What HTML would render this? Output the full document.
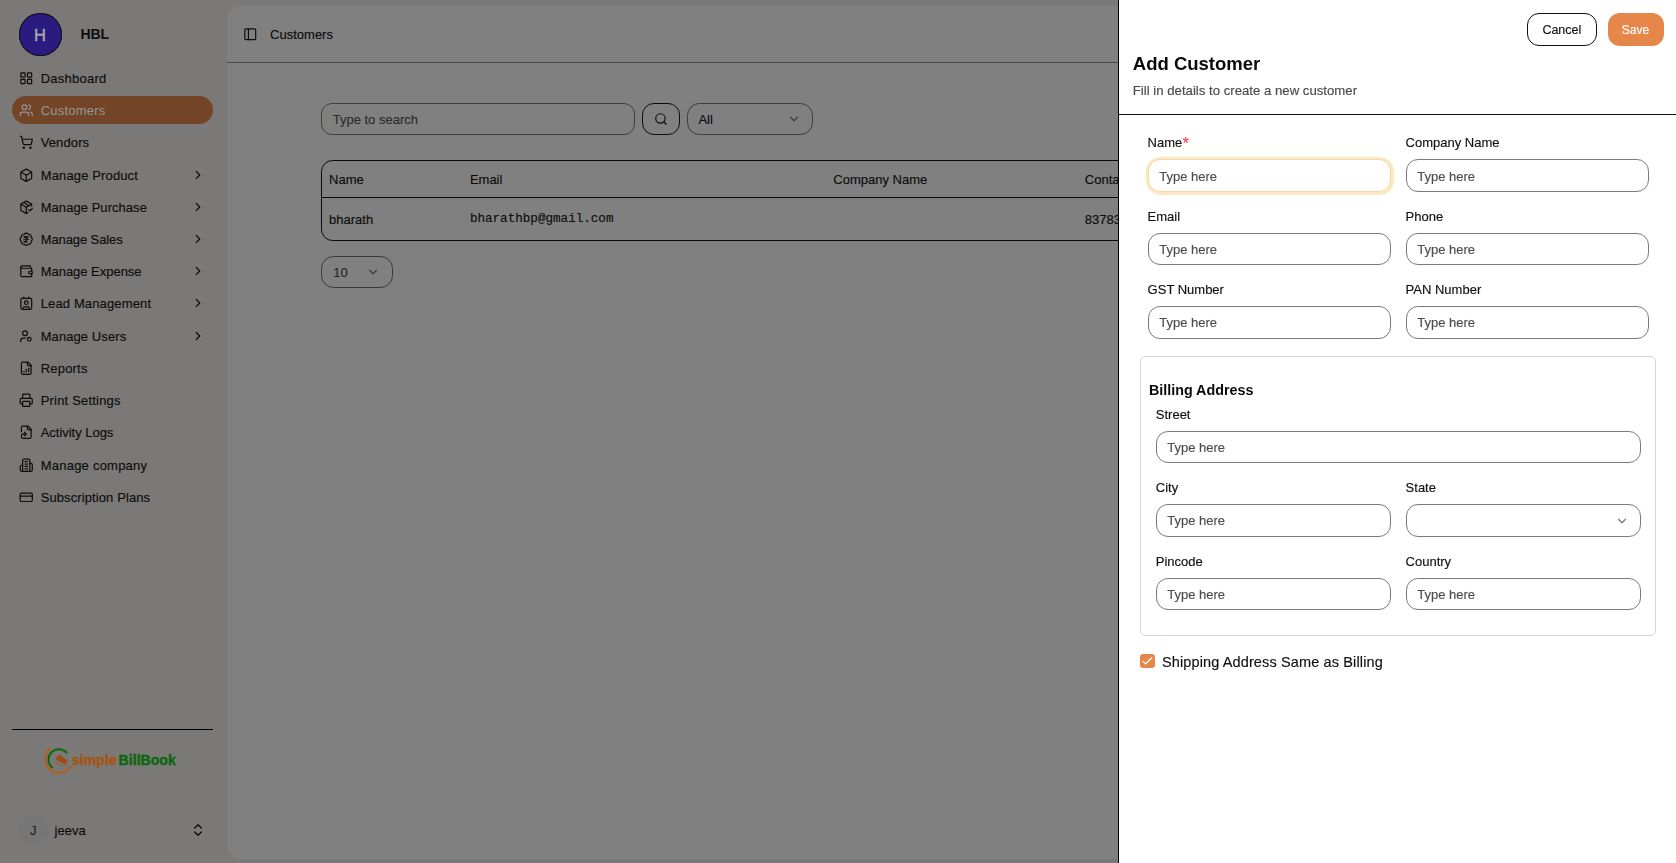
<!DOCTYPE html>
<html><head><meta charset="utf-8"><title>Add Customer</title>
<style>
html,body{margin:0;padding:0;width:1676px;height:863px;overflow:hidden;background:#7a7977;}
.r{position:absolute;}
.t{position:absolute;line-height:1;white-space:nowrap;}
.ic{position:absolute;overflow:visible;}
</style></head><body>
<div class="r" style="left:0px;top:0px;width:1676px;height:863px;background:#7a7977;"></div>
<div class="r" style="left:227px;top:6px;width:1100px;height:853px;background:#808080;border-radius:14px;"></div>
<div class="r" style="left:19.3px;top:13px;width:42.5px;height:42.5px;background:#2a1b80;border-radius:50%;box-shadow:0 0 0 1px #111 inset;"></div>
<div class="t" style="left:34.00px;top:27.03px;font-size:16.5px;color:#adadad;font-weight:400;font-family:'Liberation Sans', sans-serif;-webkit-text-stroke:0.35px #adadad;">H</div>
<div class="t" style="left:80.40px;top:27.15px;font-size:14px;color:#0d0d0d;font-weight:700;font-family:'Liberation Sans', sans-serif;">HBL</div>
<div class="r" style="left:12px;top:96px;width:201px;height:28px;background:#734425;border-radius:14px;"></div>
<div class="t" style="left:40.70px;top:71.99px;font-size:13px;color:#0d0d0d;font-weight:400;font-family:'Liberation Sans', sans-serif;letter-spacing:0.25px;-webkit-text-stroke:0.15px #0d0d0d;">Dashboard</div>
<svg class="ic" style="left:18.75px;top:70.85px" width="14.5" height="14.5" viewBox="0 0 24 24" fill="none" stroke="#0d0d0d" stroke-width="2" stroke-linecap="round" stroke-linejoin="round"><rect width="7" height="7" x="3" y="3" rx="1"/><rect width="7" height="7" x="14" y="3" rx="1"/><rect width="7" height="7" x="14" y="14" rx="1"/><rect width="7" height="7" x="3" y="14" rx="1"/></svg>
<div class="t" style="left:40.70px;top:103.99px;font-size:13px;color:#969696;font-weight:400;font-family:'Liberation Sans', sans-serif;letter-spacing:0.225px;">Customers</div>
<svg class="ic" style="left:18.75px;top:102.85px" width="14.5" height="14.5" viewBox="0 0 24 24" fill="none" stroke="#969696" stroke-width="2" stroke-linecap="round" stroke-linejoin="round"><path d="M16 21v-2a4 4 0 0 0-4-4H6a4 4 0 0 0-4 4v2"/><circle cx="9" cy="7" r="4"/><path d="M22 21v-2a4 4 0 0 0-3-3.87"/><path d="M16 3.13a4 4 0 0 1 0 7.75"/></svg>
<div class="t" style="left:40.70px;top:135.99px;font-size:13px;color:#0d0d0d;font-weight:400;font-family:'Liberation Sans', sans-serif;letter-spacing:0.117px;-webkit-text-stroke:0.15px #0d0d0d;">Vendors</div>
<svg class="ic" style="left:18.75px;top:134.85px" width="14.5" height="14.5" viewBox="0 0 24 24" fill="none" stroke="#0d0d0d" stroke-width="2" stroke-linecap="round" stroke-linejoin="round"><circle cx="8" cy="21" r="1"/><circle cx="19" cy="21" r="1"/><path d="M2.05 2.05h2l2.66 12.42a2 2 0 0 0 2 1.58h9.78a2 2 0 0 0 1.95-1.57l1.65-7.43H5.12"/></svg>
<div class="t" style="left:40.70px;top:168.99px;font-size:13px;color:#0d0d0d;font-weight:400;font-family:'Liberation Sans', sans-serif;letter-spacing:0.138px;-webkit-text-stroke:0.15px #0d0d0d;">Manage Product</div>
<svg class="ic" style="left:18.75px;top:167.85px" width="14.5" height="14.5" viewBox="0 0 24 24" fill="none" stroke="#0d0d0d" stroke-width="2" stroke-linecap="round" stroke-linejoin="round"><path d="M21 8a2 2 0 0 0-1-1.73l-7-4a2 2 0 0 0-2 0l-7 4A2 2 0 0 0 3 8v8a2 2 0 0 0 1 1.73l7 4a2 2 0 0 0 2 0l7-4A2 2 0 0 0 21 16Z"/><path d="m3.3 7 8.7 5 8.7-5"/><path d="M12 22V12"/></svg>
<svg class="ic" style="left:191px;top:168.10px" width="14" height="14" viewBox="0 0 24 24" fill="none" stroke="#0d0d0d" stroke-width="2" stroke-linecap="round" stroke-linejoin="round"><path d="m9 18 6-6-6-6"/></svg>
<div class="t" style="left:40.70px;top:200.99px;font-size:13px;color:#0d0d0d;font-weight:400;font-family:'Liberation Sans', sans-serif;letter-spacing:0.05px;-webkit-text-stroke:0.15px #0d0d0d;">Manage Purchase</div>
<svg class="ic" style="left:18.75px;top:199.85px" width="14.5" height="14.5" viewBox="0 0 24 24" fill="none" stroke="#0d0d0d" stroke-width="2" stroke-linecap="round" stroke-linejoin="round"><path d="m16 16 2 2 4-4"/><path d="M21 10V8a2 2 0 0 0-1-1.73l-7-4a2 2 0 0 0-2 0l-7 4A2 2 0 0 0 3 8v8a2 2 0 0 0 1 1.73l7 4a2 2 0 0 0 2 0l2-1.14"/><path d="m7.5 4.27 9 5.15"/><polyline points="3.29 7 12 12 20.71 7"/><line x1="12" x2="12" y1="22" y2="12"/></svg>
<svg class="ic" style="left:191px;top:200.10px" width="14" height="14" viewBox="0 0 24 24" fill="none" stroke="#0d0d0d" stroke-width="2" stroke-linecap="round" stroke-linejoin="round"><path d="m9 18 6-6-6-6"/></svg>
<div class="t" style="left:40.70px;top:232.99px;font-size:13px;color:#0d0d0d;font-weight:400;font-family:'Liberation Sans', sans-serif;letter-spacing:-0.1px;-webkit-text-stroke:0.15px #0d0d0d;">Manage Sales</div>
<svg class="ic" style="left:18.75px;top:231.85px" width="14.5" height="14.5" viewBox="0 0 24 24" fill="none" stroke="#0d0d0d" stroke-width="2" stroke-linecap="round" stroke-linejoin="round"><path d="M3.85 8.62a4 4 0 0 1 4.78-4.77 4 4 0 0 1 6.74 0 4 4 0 0 1 4.78 4.78 4 4 0 0 1 0 6.74 4 4 0 0 1-4.77 4.78 4 4 0 0 1-6.75 0 4 4 0 0 1-4.78-4.77 4 4 0 0 1 0-6.76Z"/><path d="M8 8h8"/><path d="M8 12h8"/><path d="m13 17-5-1h1a4 4 0 0 0 0-8"/></svg>
<svg class="ic" style="left:191px;top:232.10px" width="14" height="14" viewBox="0 0 24 24" fill="none" stroke="#0d0d0d" stroke-width="2" stroke-linecap="round" stroke-linejoin="round"><path d="m9 18 6-6-6-6"/></svg>
<div class="t" style="left:40.70px;top:264.99px;font-size:13px;color:#0d0d0d;font-weight:400;font-family:'Liberation Sans', sans-serif;letter-spacing:-0.023px;-webkit-text-stroke:0.15px #0d0d0d;">Manage Expense</div>
<svg class="ic" style="left:18.75px;top:263.85px" width="14.5" height="14.5" viewBox="0 0 24 24" fill="none" stroke="#0d0d0d" stroke-width="2" stroke-linecap="round" stroke-linejoin="round"><path d="M19 7V4a1 1 0 0 0-1-1H5a2 2 0 0 0 0 4h15a1 1 0 0 1 1 1v4h-3a2 2 0 0 0 0 4h3a1 1 0 0 0 1-1v-2a1 1 0 0 0-1-1"/><path d="M3 5v14a2 2 0 0 0 2 2h15a1 1 0 0 0 1-1v-4"/></svg>
<svg class="ic" style="left:191px;top:264.10px" width="14" height="14" viewBox="0 0 24 24" fill="none" stroke="#0d0d0d" stroke-width="2" stroke-linecap="round" stroke-linejoin="round"><path d="m9 18 6-6-6-6"/></svg>
<div class="t" style="left:40.70px;top:296.99px;font-size:13px;color:#0d0d0d;font-weight:400;font-family:'Liberation Sans', sans-serif;letter-spacing:0.136px;-webkit-text-stroke:0.15px #0d0d0d;">Lead Management</div>
<svg class="ic" style="left:18.75px;top:295.85px" width="14.5" height="14.5" viewBox="0 0 24 24" fill="none" stroke="#0d0d0d" stroke-width="2" stroke-linecap="round" stroke-linejoin="round"><path d="M16 2v2"/><path d="M7 22v-2a2 2 0 0 1 2-2h6a2 2 0 0 1 2 2v2"/><path d="M8 2v2"/><circle cx="12" cy="11" r="3"/><rect x="3" y="4" width="18" height="18" rx="2"/></svg>
<svg class="ic" style="left:191px;top:296.10px" width="14" height="14" viewBox="0 0 24 24" fill="none" stroke="#0d0d0d" stroke-width="2" stroke-linecap="round" stroke-linejoin="round"><path d="m9 18 6-6-6-6"/></svg>
<div class="t" style="left:40.70px;top:329.99px;font-size:13px;color:#0d0d0d;font-weight:400;font-family:'Liberation Sans', sans-serif;letter-spacing:0.082px;-webkit-text-stroke:0.15px #0d0d0d;">Manage Users</div>
<svg class="ic" style="left:18.75px;top:328.85px" width="14.5" height="14.5" viewBox="0 0 24 24" fill="none" stroke="#0d0d0d" stroke-width="2" stroke-linecap="round" stroke-linejoin="round"><circle cx="10" cy="7" r="4"/><path d="M10.3 15H7a4 4 0 0 0-4 4v2"/><circle cx="17" cy="17" r="3"/></svg>
<svg class="ic" style="left:191px;top:329.10px" width="14" height="14" viewBox="0 0 24 24" fill="none" stroke="#0d0d0d" stroke-width="2" stroke-linecap="round" stroke-linejoin="round"><path d="m9 18 6-6-6-6"/></svg>
<div class="t" style="left:40.70px;top:361.99px;font-size:13px;color:#0d0d0d;font-weight:400;font-family:'Liberation Sans', sans-serif;letter-spacing:0.2px;-webkit-text-stroke:0.15px #0d0d0d;">Reports</div>
<svg class="ic" style="left:18.75px;top:360.85px" width="14.5" height="14.5" viewBox="0 0 24 24" fill="none" stroke="#0d0d0d" stroke-width="2" stroke-linecap="round" stroke-linejoin="round"><path d="M15 2H6a2 2 0 0 0-2 2v16a2 2 0 0 0 2 2h12a2 2 0 0 0 2-2V7Z"/><path d="M14 2v4a2 2 0 0 0 2 2h4"/><path d="M8 18v-1"/><path d="M12 18v-4"/><path d="M16 18v-6"/></svg>
<div class="t" style="left:40.70px;top:393.99px;font-size:13px;color:#0d0d0d;font-weight:400;font-family:'Liberation Sans', sans-serif;letter-spacing:0.192px;-webkit-text-stroke:0.15px #0d0d0d;">Print Settings</div>
<svg class="ic" style="left:18.75px;top:392.85px" width="14.5" height="14.5" viewBox="0 0 24 24" fill="none" stroke="#0d0d0d" stroke-width="2" stroke-linecap="round" stroke-linejoin="round"><path d="M6 18H4a2 2 0 0 1-2-2v-5a2 2 0 0 1 2-2h16a2 2 0 0 1 2 2v5a2 2 0 0 1-2 2h-2"/><path d="M6 9V3a1 1 0 0 1 1-1h10a1 1 0 0 1 1 1v6"/><rect x="6" y="14" width="12" height="8" rx="1"/></svg>
<div class="t" style="left:40.70px;top:425.99px;font-size:13px;color:#0d0d0d;font-weight:400;font-family:'Liberation Sans', sans-serif;letter-spacing:-0.025px;-webkit-text-stroke:0.15px #0d0d0d;">Activity Logs</div>
<svg class="ic" style="left:18.75px;top:424.85px" width="14.5" height="14.5" viewBox="0 0 24 24" fill="none" stroke="#0d0d0d" stroke-width="2" stroke-linecap="round" stroke-linejoin="round"><path d="M4 11V4a2 2 0 0 1 2-2h9l5 5v13a2 2 0 0 1-2 2H6a2 2 0 0 1-2-2v-1"/><path d="M14 2v4a2 2 0 0 0 2 2h4"/><path d="M4 18a3 3 0 0 1 3-3h5"/><path d="m9 12 3 3-3 3"/></svg>
<div class="t" style="left:40.70px;top:458.99px;font-size:13px;color:#0d0d0d;font-weight:400;font-family:'Liberation Sans', sans-serif;letter-spacing:0.231px;-webkit-text-stroke:0.15px #0d0d0d;">Manage company</div>
<svg class="ic" style="left:18.75px;top:457.85px" width="14.5" height="14.5" viewBox="0 0 24 24" fill="none" stroke="#0d0d0d" stroke-width="2" stroke-linecap="round" stroke-linejoin="round"><path d="M6 22V4a2 2 0 0 1 2-2h8a2 2 0 0 1 2 2v18Z"/><path d="M6 12H4a2 2 0 0 0-2 2v6a2 2 0 0 0 2 2h2"/><path d="M18 9h2a2 2 0 0 1 2 2v9a2 2 0 0 1-2 2h-2"/><path d="M10 6h4"/><path d="M10 10h4"/><path d="M10 14h4"/><path d="M10 18h4"/></svg>
<div class="t" style="left:40.70px;top:490.99px;font-size:13px;color:#0d0d0d;font-weight:400;font-family:'Liberation Sans', sans-serif;letter-spacing:0.1px;-webkit-text-stroke:0.15px #0d0d0d;">Subscription Plans</div>
<svg class="ic" style="left:18.75px;top:489.85px" width="14.5" height="14.5" viewBox="0 0 24 24" fill="none" stroke="#0d0d0d" stroke-width="2" stroke-linecap="round" stroke-linejoin="round"><rect width="20" height="14" x="2" y="5" rx="2"/><line x1="2" x2="22" y1="10" y2="10"/></svg>
<div class="r" style="left:12px;top:729px;width:201px;height:1px;background:#000;"></div>
<svg class="ic" style="left:40px;top:742px" width="40" height="40" viewBox="0 0 40 40">
<path d="M9.75 6.66 A14.0 14.0 0 1 0 30.91 24.73" fill="none" stroke="#b05f1c" stroke-width="2" stroke-linecap="round"/>
<path d="M11.89 25.29 A10.4 10.4 0 1 1 26.46 10.47" fill="none" stroke="#0c6a0c" stroke-width="2.1" stroke-linecap="round"/>
<path d="M16.2 15.2 L19.6 12.8 Q24 16.5 27.4 18.2 L26.2 22.4 Q21 21 16.4 17.8 Z" fill="#a34a12"/>
<path d="M15.2 20.2 q5 4.2 12.2 2.8" fill="none" stroke="#9a5a30" stroke-width="1.1" opacity="0.7"/>
</svg>
<div class="t" style="left:72.00px;top:753.15px;font-size:14px;color:#a9530f;font-weight:700;font-family:'Liberation Sans', sans-serif;letter-spacing:0.05px;-webkit-text-stroke:0.35px #a9530f;">simple</div>
<div class="t" style="left:118.60px;top:753.15px;font-size:14px;color:#0b650b;font-weight:700;font-family:'Liberation Sans', sans-serif;letter-spacing:0.05px;-webkit-text-stroke:0.35px #0b650b;">BillBook</div>
<div class="r" style="left:19px;top:816px;width:28.6px;height:28.6px;background:#767676;border-radius:50%;"></div>
<div class="t" style="left:29.90px;top:823.99px;font-size:13px;color:#222;font-weight:400;font-family:'Liberation Sans', sans-serif;-webkit-text-stroke:0.15px #222;">J</div>
<div class="t" style="left:54.60px;top:823.99px;font-size:13px;color:#0d0d0d;font-weight:400;font-family:'Liberation Sans', sans-serif;-webkit-text-stroke:0.15px #0d0d0d;">jeeva</div>
<svg class="ic" style="left:190px;top:822px" width="16" height="16" viewBox="0 0 24 24" fill="none" stroke="#0d0d0d" stroke-width="2" stroke-linecap="round" stroke-linejoin="round"><path d="m7 15 5 5 5-5"/><path d="m7 9 5-5 5 5"/></svg>
<svg class="ic" style="left:242.75px;top:26.75px" width="14.5" height="14.5" viewBox="0 0 24 24" fill="none" stroke="#0d0d0d" stroke-width="2" stroke-linecap="round" stroke-linejoin="round"><rect width="18" height="18" x="3" y="3" rx="2"/><path d="M9 3v18"/></svg>
<div class="t" style="left:270.10px;top:27.99px;font-size:13px;color:#0d0d0d;font-weight:400;font-family:'Liberation Sans', sans-serif;-webkit-text-stroke:0.15px #0d0d0d;">Customers</div>
<div class="r" style="left:227px;top:62px;width:1000px;height:1px;background:#4a4a4a;"></div>
<div class="r" style="left:321px;top:103px;width:314px;height:32px;border:1px solid #414141;border-radius:11px;box-sizing:border-box;"></div>
<div class="t" style="left:332.70px;top:112.99px;font-size:13px;color:#2c2c2c;font-weight:400;font-family:'Liberation Sans', sans-serif;-webkit-text-stroke:0.15px #2c2c2c;">Type to search</div>
<div class="r" style="left:642px;top:103px;width:38px;height:32px;border:1px solid #0c0c0c;border-radius:12px;box-sizing:border-box;"></div>
<svg class="ic" style="left:654px;top:112px" width="14" height="14" viewBox="0 0 24 24" fill="none" stroke="#0d0d0d" stroke-width="2" stroke-linecap="round" stroke-linejoin="round"><circle cx="11" cy="11" r="8"/><path d="m21 21-4.3-4.3"/></svg>
<div class="r" style="left:687px;top:103px;width:126px;height:32px;border:1px solid #3e3e3e;border-radius:12.5px;box-sizing:border-box;"></div>
<div class="t" style="left:698.40px;top:112.99px;font-size:13px;color:#0d0d0d;font-weight:400;font-family:'Liberation Sans', sans-serif;-webkit-text-stroke:0.15px #0d0d0d;">All</div>
<svg class="ic" style="left:787px;top:111.7px" width="14" height="14" viewBox="0 0 24 24" fill="none" stroke="#3a3a3a" stroke-width="2" stroke-linecap="round" stroke-linejoin="round"><path d="m6 9 6 6 6-6"/></svg>
<div class="r" style="left:321px;top:160px;width:820px;height:81px;border:1px solid #0a0a0a;border-radius:11.5px;box-sizing:border-box;"></div>
<div class="r" style="left:322px;top:197px;width:800px;height:1px;background:#0a0a0a;"></div>
<div class="t" style="left:329.10px;top:172.99px;font-size:13px;color:#0d0d0d;font-weight:400;font-family:'Liberation Sans', sans-serif;-webkit-text-stroke:0.15px #0d0d0d;">Name</div>
<div class="t" style="left:469.90px;top:172.99px;font-size:13px;color:#0d0d0d;font-weight:400;font-family:'Liberation Sans', sans-serif;-webkit-text-stroke:0.15px #0d0d0d;">Email</div>
<div class="t" style="left:833.30px;top:172.99px;font-size:13px;color:#0d0d0d;font-weight:400;font-family:'Liberation Sans', sans-serif;-webkit-text-stroke:0.15px #0d0d0d;">Company Name</div>
<div class="t" style="left:1084.80px;top:172.99px;font-size:13px;color:#0d0d0d;font-weight:400;font-family:'Liberation Sans', sans-serif;-webkit-text-stroke:0.15px #0d0d0d;">Contact</div>
<div class="t" style="left:329.10px;top:212.99px;font-size:13px;color:#0d0d0d;font-weight:400;font-family:'Liberation Sans', sans-serif;-webkit-text-stroke:0.15px #0d0d0d;">bharath</div>
<div class="t" style="left:469.90px;top:213.35px;font-size:12.6px;color:#0d0d0d;font-weight:400;font-family:'Liberation Mono', monospace;-webkit-text-stroke:0.15px #0d0d0d;">bharathbp@gmail.com</div>
<div class="t" style="left:1084.80px;top:212.99px;font-size:13px;color:#0d0d0d;font-weight:400;font-family:'Liberation Sans', sans-serif;-webkit-text-stroke:0.15px #0d0d0d;">8378312345</div>
<div class="r" style="left:321px;top:256px;width:72px;height:32px;border:1px solid #3a3a3a;border-radius:12.5px;box-sizing:border-box;"></div>
<div class="t" style="left:333.30px;top:265.99px;font-size:13px;color:#252525;font-weight:400;font-family:'Liberation Sans', sans-serif;-webkit-text-stroke:0.15px #252525;">10</div>
<svg class="ic" style="left:366px;top:265px" width="14" height="14" viewBox="0 0 24 24" fill="none" stroke="#3a3a3a" stroke-width="2" stroke-linecap="round" stroke-linejoin="round"><path d="m6 9 6 6 6-6"/></svg>
<div style="position:absolute;left:0;top:0;width:1676px;height:863px;will-change:transform;">
<div class="r" style="left:1118px;top:0px;width:558px;height:863px;background:#fff;border-left:1px solid #000;box-sizing:border-box;"></div>
<div class="r" style="left:1527px;top:13px;width:70px;height:33px;border:1px solid #111;border-radius:12px;box-sizing:border-box;"></div>
<div class="t" style="left:1542.40px;top:23.92px;font-size:12.5px;color:#111;font-weight:400;font-family:'Liberation Sans', sans-serif;-webkit-text-stroke:0.15px #111;">Cancel</div>
<div class="r" style="left:1608px;top:13px;width:56px;height:33px;background:#e5874a;border-radius:12px;"></div>
<div class="t" style="left:1621.80px;top:23.84px;font-size:12px;color:#fff;font-weight:400;font-family:'Liberation Sans', sans-serif;-webkit-text-stroke:0.15px #fff;">Save</div>
<div class="t" style="left:1132.80px;top:54.84px;font-size:18.5px;color:#0a0a0a;font-weight:700;font-family:'Liberation Sans', sans-serif;">Add Customer</div>
<div class="t" style="left:1132.80px;top:83.82px;font-size:13.2px;color:#4a4a4a;font-weight:400;font-family:'Liberation Sans', sans-serif;-webkit-text-stroke:0.15px #4a4a4a;">Fill in details to create a new customer</div>
<div class="r" style="left:1119px;top:114px;width:557px;height:1px;background:#111;"></div>
<div class="t" style="left:1147.60px;top:135.99px;font-size:13px;color:#111;font-weight:400;font-family:'Liberation Sans', sans-serif;-webkit-text-stroke:0.15px #111;">Name</div>
<div class="t" style="left:1182.60px;top:135.03px;font-size:16.5px;color:#ee3842;font-weight:400;font-family:'Liberation Sans', sans-serif;-webkit-text-stroke:0.1px #ee3842;">*</div>
<div class="t" style="left:1405.60px;top:135.99px;font-size:13px;color:#111;font-weight:400;font-family:'Liberation Sans', sans-serif;-webkit-text-stroke:0.15px #111;">Company Name</div>
<div class="r" style="left:1145.5px;top:156.5px;width:248px;height:38px;background:#fde8c4;border-radius:14.5px;"></div>
<div class="r" style="left:1148px;top:159px;width:243px;height:33px;background:#fff;border:1px solid #f8d7a0;border-radius:12px;box-sizing:border-box;"></div>
<div class="t" style="left:1159.20px;top:169.99px;font-size:13px;color:#4d4d4d;font-weight:400;font-family:'Liberation Sans', sans-serif;-webkit-text-stroke:0.15px #4d4d4d;">Type here</div>
<div class="r" style="left:1406px;top:159px;width:243px;height:33px;background:#fff;border:1px solid #7a7a7a;border-radius:12px;box-sizing:border-box;"></div>
<div class="t" style="left:1417.20px;top:169.99px;font-size:13px;color:#4d4d4d;font-weight:400;font-family:'Liberation Sans', sans-serif;-webkit-text-stroke:0.15px #4d4d4d;">Type here</div>
<div class="t" style="left:1147.60px;top:209.99px;font-size:13px;color:#111;font-weight:400;font-family:'Liberation Sans', sans-serif;-webkit-text-stroke:0.15px #111;">Email</div>
<div class="t" style="left:1405.60px;top:209.99px;font-size:13px;color:#111;font-weight:400;font-family:'Liberation Sans', sans-serif;-webkit-text-stroke:0.15px #111;">Phone</div>
<div class="r" style="left:1148px;top:233px;width:243px;height:32px;background:#fff;border:1px solid #7a7a7a;border-radius:12px;box-sizing:border-box;"></div>
<div class="t" style="left:1159.20px;top:242.99px;font-size:13px;color:#4d4d4d;font-weight:400;font-family:'Liberation Sans', sans-serif;-webkit-text-stroke:0.15px #4d4d4d;">Type here</div>
<div class="r" style="left:1406px;top:233px;width:243px;height:32px;background:#fff;border:1px solid #7a7a7a;border-radius:12px;box-sizing:border-box;"></div>
<div class="t" style="left:1417.20px;top:242.99px;font-size:13px;color:#4d4d4d;font-weight:400;font-family:'Liberation Sans', sans-serif;-webkit-text-stroke:0.15px #4d4d4d;">Type here</div>
<div class="t" style="left:1147.60px;top:282.99px;font-size:13px;color:#111;font-weight:400;font-family:'Liberation Sans', sans-serif;-webkit-text-stroke:0.15px #111;">GST Number</div>
<div class="t" style="left:1405.60px;top:282.99px;font-size:13px;color:#111;font-weight:400;font-family:'Liberation Sans', sans-serif;-webkit-text-stroke:0.15px #111;">PAN Number</div>
<div class="r" style="left:1148px;top:306px;width:243px;height:33px;background:#fff;border:1px solid #7a7a7a;border-radius:12px;box-sizing:border-box;"></div>
<div class="t" style="left:1159.20px;top:315.99px;font-size:13px;color:#4d4d4d;font-weight:400;font-family:'Liberation Sans', sans-serif;-webkit-text-stroke:0.15px #4d4d4d;">Type here</div>
<div class="r" style="left:1406px;top:306px;width:243px;height:33px;background:#fff;border:1px solid #7a7a7a;border-radius:12px;box-sizing:border-box;"></div>
<div class="t" style="left:1417.20px;top:315.99px;font-size:13px;color:#4d4d4d;font-weight:400;font-family:'Liberation Sans', sans-serif;-webkit-text-stroke:0.15px #4d4d4d;">Type here</div>
<div class="r" style="left:1140px;top:356px;width:516px;height:280px;border:1px solid #d3d7de;border-radius:5px;box-sizing:border-box;"></div>
<div class="t" style="left:1149.00px;top:382.89px;font-size:14.3px;color:#0a0a0a;font-weight:700;font-family:'Liberation Sans', sans-serif;">Billing Address</div>
<div class="t" style="left:1155.80px;top:407.99px;font-size:13px;color:#111;font-weight:400;font-family:'Liberation Sans', sans-serif;-webkit-text-stroke:0.15px #111;">Street</div>
<div class="r" style="left:1156px;top:431px;width:485px;height:32px;background:#fff;border:1px solid #7a7a7a;border-radius:12px;box-sizing:border-box;"></div>
<div class="t" style="left:1167.20px;top:440.99px;font-size:13px;color:#4d4d4d;font-weight:400;font-family:'Liberation Sans', sans-serif;-webkit-text-stroke:0.15px #4d4d4d;">Type here</div>
<div class="t" style="left:1155.80px;top:480.99px;font-size:13px;color:#111;font-weight:400;font-family:'Liberation Sans', sans-serif;-webkit-text-stroke:0.15px #111;">City</div>
<div class="t" style="left:1405.60px;top:480.99px;font-size:13px;color:#111;font-weight:400;font-family:'Liberation Sans', sans-serif;-webkit-text-stroke:0.15px #111;">State</div>
<div class="r" style="left:1156px;top:504px;width:235px;height:33px;background:#fff;border:1px solid #7a7a7a;border-radius:12px;box-sizing:border-box;"></div>
<div class="t" style="left:1167.20px;top:513.99px;font-size:13px;color:#4d4d4d;font-weight:400;font-family:'Liberation Sans', sans-serif;-webkit-text-stroke:0.15px #4d4d4d;">Type here</div>
<div class="r" style="left:1406px;top:504px;width:235px;height:33px;background:#fff;border:1px solid #7a7a7a;border-radius:12px;box-sizing:border-box;"></div>
<svg class="ic" style="left:1615px;top:513.5px" width="14" height="14" viewBox="0 0 24 24" fill="none" stroke="#777" stroke-width="2" stroke-linecap="round" stroke-linejoin="round"><path d="m6 9 6 6 6-6"/></svg>
<div class="t" style="left:1155.80px;top:554.99px;font-size:13px;color:#111;font-weight:400;font-family:'Liberation Sans', sans-serif;-webkit-text-stroke:0.15px #111;">Pincode</div>
<div class="t" style="left:1405.60px;top:554.99px;font-size:13px;color:#111;font-weight:400;font-family:'Liberation Sans', sans-serif;-webkit-text-stroke:0.15px #111;">Country</div>
<div class="r" style="left:1156px;top:578px;width:235px;height:32px;background:#fff;border:1px solid #7a7a7a;border-radius:12px;box-sizing:border-box;"></div>
<div class="t" style="left:1167.20px;top:587.99px;font-size:13px;color:#4d4d4d;font-weight:400;font-family:'Liberation Sans', sans-serif;-webkit-text-stroke:0.15px #4d4d4d;">Type here</div>
<div class="r" style="left:1406px;top:578px;width:235px;height:32px;background:#fff;border:1px solid #7a7a7a;border-radius:12px;box-sizing:border-box;"></div>
<div class="t" style="left:1417.20px;top:587.99px;font-size:13px;color:#4d4d4d;font-weight:400;font-family:'Liberation Sans', sans-serif;-webkit-text-stroke:0.15px #4d4d4d;">Type here</div>
<div class="r" style="left:1140px;top:654px;width:15px;height:14px;background:#e5874a;border-radius:3px;"></div>
<svg class="ic" style="left:1140px;top:654px" width="15" height="14" viewBox="0 0 15 14" fill="none" stroke="#fff" stroke-width="1.25" stroke-linecap="round" stroke-linejoin="round"><path d="M3 7.4 5.6 9.8 11.7 4"/></svg>
<div class="t" style="left:1161.90px;top:654.72px;font-size:14.5px;color:#111;font-weight:400;font-family:'Liberation Sans', sans-serif;letter-spacing:0.13px;-webkit-text-stroke:0.15px #111;">Shipping Address Same as Billing</div>
</div>
</body></html>
